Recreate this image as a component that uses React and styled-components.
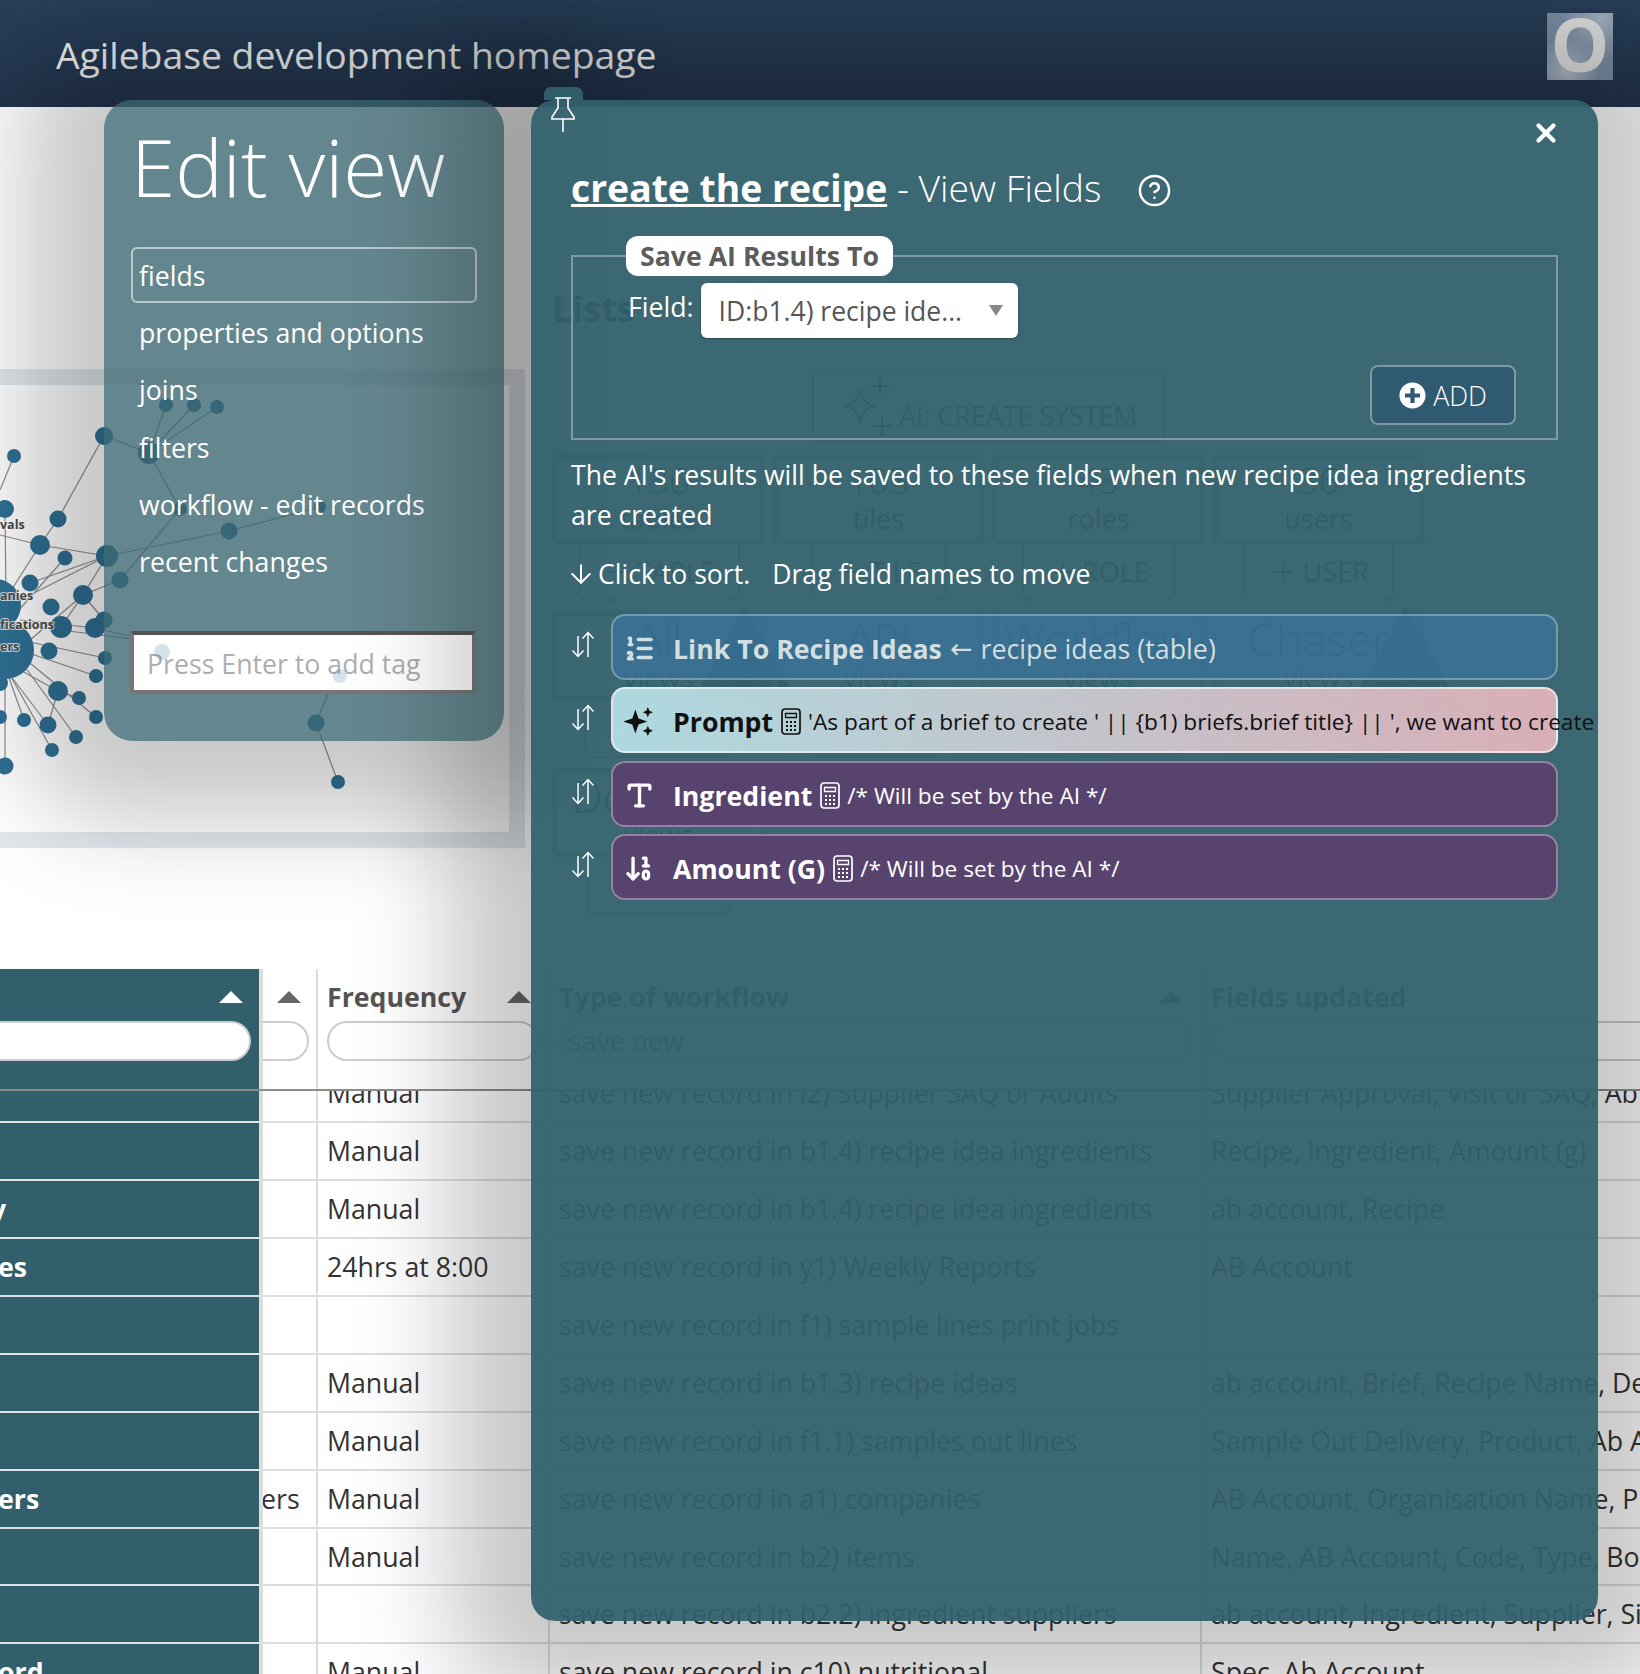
// Agilebase - edit view over the admin homepage
import React from "react";
import styled, { createGlobalStyle } from "styled-components";
import { ArrowDown, ArrowDown10, CircleHelp, ListOrdered, Plus, Type, X } from "lucide-react";
import { FaPlusCircle } from "react-icons/fa";

const GlobalStyle = createGlobalStyle`
  html, body {
    margin: 0;
    padding: 0;
    background: #fff;
  }
  body {
    font-family: "Open Sans", "Liberation Sans", sans-serif;
    color: #333;
  }
  * { box-sizing: border-box; }
`;

const navItems = [
  "fields",
  "properties and options",
  "joins",
  "filters",
  "workflow - edit records",
  "recent changes",
];

const StarsIcon = () => (
  <svg width="29" height="29" viewBox="0 0 28 28" fill="currentColor">
    <path d="M11 2.500l3 8.500 8.500 3-8.500 3-3 8.500-3-8.500-8.500-3 8.500-3z" />
    <path d="M23 0l1.500 3.500 3.500 1.500-3.500 1.500L23 10l-1.500-3.500L18 5l3.500-1.500z" />
    <path d="M23 18l1.500 3.500 3.500 1.500-3.500 1.500L23 28l-1.500-3.500L18 23l3.500-1.500z" />
  </svg>
);

const fields = [
  { kind: "link", icon: ListOrdered, name: "Link To Recipe Ideas", arrow: true, note: "recipe ideas (table)" },
  { kind: "prompt", icon: StarsIcon, name: "Prompt", calc: true, note: "'As part of a brief to create ' || {b1) briefs.brief title} || ', we want to create" },
  { kind: "plain", icon: Type, name: "Ingredient", calc: true, note: "/* Will be set by the AI */" },
  { kind: "plain", icon: ArrowDown10, name: "Amount (G)", calc: true, note: "/* Will be set by the AI */" },
];

const cards = [
  { big: false, title: "136", label: "tables", add: "TABLE", addWidth: 162 },
  { big: false, title: "103", label: "tiles", add: "TILE", addWidth: 136 },
  { big: false, title: "43", label: "roles", add: "ROLE", addWidth: 153 },
  { big: false, title: "36", label: "users", add: "USER", addWidth: 151 },
  { big: true, title: "All", label: "views", add: "VIEW", addWidth: 149, warn: "4" },
  { big: true, title: "API", label: "views", add: "API", addWidth: 125 },
  { big: true, title: "Workflow", label: "views", add: "WORKFLOW", addWidth: 167 },
  { big: true, title: "Chaser", label: "views", add: "CHASER", addWidth: 185, warn: "2" },
  { big: true, title: "Doc Gen", label: "views", add: "DOC", addWidth: 143 },
];

const rows = [
  { tail: "", side: "", freq: "Manual", flow: "save new record in i2) Supplier SAQ or Audits", updated: "Supplier Approval, Visit or SAQ, Ab Account" },
  { tail: "", side: "", freq: "Manual", flow: "save new record in b1.4) recipe idea ingredients", updated: "Recipe, Ingredient, Amount (g)" },
  { tail: "y", side: "", freq: "Manual", flow: "save new record in b1.4) recipe idea ingredients", updated: "ab account, Recipe", pull: true },
  { tail: "es", side: "", freq: "24hrs at 8:00", flow: "save new record in y1) Weekly Reports", updated: "AB Account" },
  { tail: "", side: "", freq: "", flow: "save new record in f1) sample lines print jobs", updated: "" },
  { tail: "", side: "", freq: "Manual", flow: "save new record in b1.3) recipe ideas", updated: "ab account, Brief, Recipe Name, Description" },
  { tail: "", side: "", freq: "Manual", flow: "save new record in f1.1) samples out lines", updated: "Sample Out Delivery, Product, Ab Account" },
  { tail: "ers", side: "ers", freq: "Manual", flow: "save new record in a1) companies", updated: "AB Account, Organisation Name, Phone" },
  { tail: "", side: "", freq: "Manual", flow: "save new record in b2) items", updated: "Name, AB Account, Code, Type, Boxes" },
  { tail: "", side: "", freq: "", flow: "save new record in b2.2) ingredient suppliers", updated: "ab account, Ingredient, Supplier, Size" },
  { tail: "ord", side: "", freq: "Manual", flow: "save new record in c10) nutritional", updated: "Spec, Ab Account" },
];

const nodes = [
  [104, 436, 9], [14, 456, 7], [149, 453, 11], [5, 509, 9], [58, 519, 8.5], [180, 509, 7],
  [40, 545, 10], [65, 558, 7.5], [107, 556, 11], [229, 531, 8.5], [320, 507, 6], [120, 580, 8.5],
  [30, 583, 8.5], [83, 595, 10], [51, 607, 8.5], [61, 627, 11], [95, 628, 10], [104, 620, 8.5],
  [49, 651, 8.5], [105, 658, 7], [96, 676, 7], [316, 723, 8.5], [338, 782, 7], [58, 691, 10],
  [79, 698, 7], [96, 717, 7], [48, 725, 8.5], [76, 737, 7], [24, 720, 7], [52, 750, 7], [5, 766, 8.5],
  [166, 405, 7], [194, 405, 7], [217, 407, 7], [0, 717, 7], [0, 683, 8],
  [-5, 605, 26], [5, 650, 29],
];

const links = [
  [104, 436, 58, 519], [58, 519, 40, 545], [104, 436, 149, 453], [149, 453, 180, 509], [180, 509, 120, 580],
  [149, 453, 166, 405], [149, 453, 194, 405], [149, 453, 217, 407], [107, 556, 229, 531], [229, 531, 320, 507],
  [107, 556, 40, 545], [107, 556, 83, 595], [107, 556, 20, 600], [40, 545, 0, 535], [40, 545, 5, 600],
  [14, 456, 0, 490], [5, 509, 6, 600], [65, 558, 10, 620], [120, 580, 83, 595], [83, 595, 30, 640],
  [83, 595, 104, 620], [20, 620, 95, 628], [20, 625, 156, 642], [95, 628, 156, 642], [20, 640, 105, 658],
  [20, 650, 96, 676], [20, 655, 96, 717], [20, 660, 76, 737], [20, 670, 58, 691], [58, 691, 48, 725],
  [10, 675, 48, 725], [10, 675, 52, 750], [8, 675, 24, 720], [5, 680, 5, 766], [58, 691, 79, 698],
  [316, 723, 338, 782], [316, 723, 337, 673], [83, 595, 61, 627], [30, 583, 107, 556],
];

const PinIcon = () => (
  <svg width="28" height="36" viewBox="0 0 28 36" fill="none" stroke="#fff" strokeWidth="1.6">
    <path d="M6 2h16M9 2v10L3 21v2h22v-2l-6-9V2M14 23v13" />
  </svg>
);

const SortIcon = () => (
  <svg width="24" height="27" viewBox="0 0 24 27" fill="none" stroke="#fff" strokeWidth="1.5">
    <path d="M7 5v20M1.500 19.500L7 25.500l5.500-6M17 26V2M11.500 7.500L17 1.500l5.500 6" />
  </svg>
);

const CalcGlyph = () => (
  <svg width="20" height="27" viewBox="0 0 20 27" fill="none" stroke="currentColor" strokeWidth="1.700">
    <rect x="1" y="1" width="18" height="25" rx="3" />
    <path d="M4.500 5.500h11v4h-11z" strokeWidth="1.300" />
    <path d="M5 14h2M9 14h2M13 14h2M5 18h2M9 18h2M13 18h2M5 22h2M9 22h2M13 22h2" strokeWidth="2" />
  </svg>
);

const AiStarIcon = () => (
  <svg width="60" height="68" viewBox="0 0 60 68" fill="none" stroke="#555" strokeWidth="2">
    <path d="M22 18c2 10 6 14 16 16-10 2-14 6-16 16-2-10-6-14-16-16 10-2 14-6 16-16zM42 4v20M32 14h20M44 44v20M34 54h20" />
  </svg>
);

const WarnTriangle = ({ value }) => (
  <WarnMark width="116" height="104" viewBox="0 0 116 104">
    <path d="M58 0L116 104H0z" fill="#5b686e" />
    <text x="58" y="92" textAnchor="middle" fontSize="44" fontWeight="700" fill="#33404a">
      {value}
    </text>
  </WarnMark>
);

const NetworkGraph = () => (
  <GraphSvg viewBox="0 385 509 448" width="509" height="448">
    {links.map(([x1, y1, x2, y2], i) => (
      <line key={i} x1={x1} y1={y1} x2={x2} y2={y2} stroke="#8d8d8d" strokeWidth="1.2" />
    ))}
    {nodes.map(([cx, cy, r], i) => (
      <circle key={i} cx={cx} cy={cy} r={r} fill="#2f7196" />
    ))}
    <GraphLabel x="0" y="529">vals</GraphLabel>
    <GraphLabel x="0" y="600">anies</GraphLabel>
    <GraphLabel x="0" y="629">fications</GraphLabel>
    <GraphLabel x="0" y="651">ers</GraphLabel>
  </GraphSvg>
);

const AdminPanels = () => (
  <AdminColumn>
    <ListsHeading>Lists</ListsHeading>
    <CreateSystem>
      <AiStarIcon />
      <span>AI: CREATE SYSTEM</span>
    </CreateSystem>
    <CardGrid>
      {cards.map((c) => (
        <CardCell key={c.add}>
          <Card>
            <CardTitle $big={c.big}>{c.title}</CardTitle>
            <CardLabel>{c.label}</CardLabel>
            {c.warn && <WarnTriangle value={c.warn} />}
          </Card>
          <AddLink $width={c.addWidth}>
            <Plus size={30} strokeWidth={1.5} />
            {c.add}
          </AddLink>
        </CardCell>
      ))}
    </CardGrid>
  </AdminColumn>
);

const WorkflowTable = () => (
  <Table>
    <HeadRow>
      <FrozenHead>
        <HeadTitle>
          <span />
          <SortMark $color="#fff" />
        </HeadTitle>
        <FilterPill $pull />
      </FrozenHead>
      <HeadCell $width="55px">
        <HeadTitle>
          <span />
          <SortMark />
        </HeadTitle>
        <FilterPill $pull />
      </HeadCell>
      <HeadCell>
        <HeadTitle>
          <span>Frequency</span>
          <SortMark />
        </HeadTitle>
        <FilterPill />
      </HeadCell>
      <HeadCell>
        <HeadTitle>
          <span>Type of workflow</span>
          <SortMark />
        </HeadTitle>
        <FilterPill>save new</FilterPill>
      </HeadCell>
      <HeadCell $last>
        <HeadTitle>
          <span>Fields updated</span>
        </HeadTitle>
        <FilterPill $open />
      </HeadCell>
    </HeadRow>
    <TableBody>
      <BodyScroll>
        {rows.map((r, i) => (
          <BodyRow key={i}>
            <FrozenCell $pull={r.pull}>{r.tail}</FrozenCell>
            <BodyCell $flush>{r.side}</BodyCell>
            <BodyCell>{r.freq}</BodyCell>
            <BodyCell>{r.flow}</BodyCell>
            <BodyCell $last>{r.updated}</BodyCell>
          </BodyRow>
        ))}
      </BodyScroll>
    </TableBody>
  </Table>
);

const EditViewPanel = () => (
  <EditPanel>
    <EditTitle>Edit view</EditTitle>
    <NavList>
      {navItems.map((item, i) => (
        <NavItem key={item} $active={i === 0}>
          {item}
        </NavItem>
      ))}
    </NavList>
    <TagInput>
      Press Enter to add tag
      <SeeThroughNode $left="20px" $top="9px" $size="16px" />
      <SeeThroughNode $left="199px" $top="34px" $size="14px" />
    </TagInput>
  </EditPanel>
);

const FieldsModal = () => (
  <Modal>
    <PinTab>
      <PinIcon />
    </PinTab>
    <CloseButton>
      <X size={30} strokeWidth={3.4} />
    </CloseButton>
    <ModalTitle>
      <strong>create the recipe</strong>
      <span> - View Fields</span>
      <CircleHelp size={35} strokeWidth={1.7} />
    </ModalTitle>
    <SaveBox>
      <SaveLegend>Save AI Results To</SaveLegend>
      <FieldRow>
        <FieldLabel>Field:</FieldLabel>
        <FieldSelect>
          ID:b1.4) recipe ide...
          <Caret />
        </FieldSelect>
      </FieldRow>
      <AddRow>
        <AddButton>
          <FaPlusCircle size={27} />
          ADD
        </AddButton>
      </AddRow>
    </SaveBox>
    <Explain>
      The AI's results will be saved to these fields when new recipe idea ingredients are created
    </Explain>
    <SortHint>
      <ArrowDown size={30} strokeWidth={1.6} />
      <span>Click to sort.</span>
      <span>Drag field names to move</span>
    </SortHint>
    <FieldList>
      {fields.map((f) => {
        const Icon = f.icon;
        return (
          <FieldLine key={f.name}>
            <SortToggle>
              <SortIcon />
            </SortToggle>
            <FieldCard $kind={f.kind}>
              <FieldIcon>
                <Icon size={31} strokeWidth={2.6} />
              </FieldIcon>
              <FieldName>{f.name}</FieldName>
              {f.arrow && <LinkArrow>←</LinkArrow>}
              {f.calc && (
                <CalcIcon>
                  <CalcGlyph />
                </CalcIcon>
              )}
              <FieldNote $large={f.arrow}>{f.note}</FieldNote>
            </FieldCard>
          </FieldLine>
        );
      })}
    </FieldList>
  </Modal>
);

export default function App() {
  return (
    <Page>
      <GlobalStyle />
      <TopBar>
        <AppTitle>Agilebase development homepage</AppTitle>
        <Avatar>O</Avatar>
      </TopBar>
      <Overview>
        <GraphPanel>
          <NetworkGraph />
        </GraphPanel>
        <AdminPanels />
      </Overview>
      <WorkflowTable />
      <EditViewPanel />
      <FieldsModal />
    </Page>
  );
}

const Page = styled.div`
  position: relative;
  width: 1640px;
  height: 1674px;
  overflow: hidden;
  background: #fff;
`;

const TopBar = styled.header`
  height: 107px;
  background: linear-gradient(180deg, #27405a 0%, #23344d 100%);
  display: flex;
  align-items: flex-start;
  justify-content: space-between;
  padding: 13px 27px 0 56px;
`;

const AppTitle = styled.h1`
  margin: 0;
  padding-top: 17px;
  font-size: 37.3px;
  line-height: 50px;
  font-weight: 400;
  color: #f2f2f2;
`;

const Avatar = styled.div`
  width: 66px;
  height: 67px;
  background:
    radial-gradient(circle at 30% 85%, #b6c0cb 0%, transparent 45%),
    radial-gradient(circle at 80% 10%, #a7b4c2 0%, transparent 50%),
    #7c8fa6;
  color: #e2e2e2;
  font-size: 74px;
  font-weight: 700;
  line-height: 62px;
  text-align: center;
  overflow: hidden;
`;

const Overview = styled.section`
  height: 862px;
  display: flex;
  align-items: flex-start;
  gap: 27px;
  overflow: hidden;
`;

const GraphPanel = styled.div`
  flex: none;
  width: 525px;
  height: 479px;
  margin-top: 262px;
  border: 16px solid #e2e8ed;
  border-left: 0;
  overflow: hidden;
`;

const GraphSvg = styled.svg`
  display: block;
`;

const GraphLabel = styled.text`
  font-size: 12.5px;
  font-weight: 700;
  fill: #4b4b4b;
  paint-order: stroke;
  stroke: rgba(255, 255, 255, 0.8);
  stroke-width: 2px;
`;

const AdminColumn = styled.div`
  flex: none;
  width: 873px;
  padding-top: 180px;
`;

const ListsHeading = styled.h2`
  margin: 0;
  height: 83px;
  font-size: 36px;
  line-height: 44px;
  font-weight: 700;
  color: #333;
`;

const CreateSystem = styled.div`
  width: 353px;
  height: 72px;
  margin: 0 auto 12px;
  padding-left: 24px;
  display: flex;
  align-items: flex-end;
  border: 2px solid #9aaeb6;
  border-radius: 4px;
  font-size: 26.8px;
  line-height: 40px;
  color: #555;
  overflow: hidden;
  span {
    margin: 0 0 4px 1px;
  }
`;

const CardGrid = styled.div`
  display: grid;
  grid-template-columns: repeat(4, 213px);
  column-gap: 7px;
  row-gap: 10px;
`;

const CardCell = styled.div`
  display: flex;
  flex-direction: column;
  align-items: center;
`;

const Card = styled.div`
  position: relative;
  width: 213px;
  height: 90px;
  border: 6px solid #a6bbc4;
  border-radius: 6px;
  text-align: center;
  color: #444;
`;

const CardTitle = styled.div`
  font-size: ${(p) => (p.$big ? "45px" : "36px")};
  line-height: ${(p) => (p.$big ? "44px" : "42px")};
  font-weight: 300;
  white-space: nowrap;
`;

const CardLabel = styled.div`
  font-size: 27px;
  line-height: 30px;
  margin-top: 2px;
`;

const WarnMark = styled.svg`
  position: absolute;
  top: -10px;
  right: -44px;
`;

const AddLink = styled.div`
  width: ${(p) => p.$width}px;
  height: 57px;
  display: flex;
  align-items: center;
  justify-content: center;
  gap: 4px;
  border: 2px solid #9aaeb6;
  border-top: 0;
  border-radius: 0 0 8px 8px;
  font-size: 27px;
  color: #555;
`;

const Table = styled.div`
  width: 1640px;
`;

const HeadRow = styled.div`
  height: 122px;
  display: flex;
  border-bottom: 2px solid #8d8d8d;
`;

const FrozenHead = styled.div`
  flex: none;
  width: 263px;
  background: #315f6c;
  border-right: 4px solid #ddd;
  padding: 0 8px 0 0;
  overflow: hidden;
`;

const HeadCell = styled.div`
  flex: ${(p) => (p.$last ? "1 1 0" : "none")};
  width: ${(p) => p.$width || "auto"};
  min-width: ${(p) => (p.$last ? "0" : "auto")};
  border-right: ${(p) => (p.$last ? "0" : "2px solid #ddd")};
  padding: 0 ${(p) => (p.$last ? "0" : p.$width ? "7px" : "9px")} 0 ${(p) => (p.$width ? "0" : "9px")};
  overflow: hidden;
  &:nth-child(3) { width: 232px; }
  &:nth-child(4) { width: 652px; }
`;

const HeadTitle = styled.div`
  height: 52px;
  padding-top: 3px;
  padding-right: 8px;
  display: flex;
  align-items: center;
  justify-content: space-between;
  font-size: 26.7px;
  font-weight: 700;
  color: #555;
`;

const SortMark = styled.i`
  width: 0;
  height: 0;
  border-left: 12px solid transparent;
  border-right: 12px solid transparent;
  border-bottom: 12px solid ${(p) => p.$color || "#666"};
`;

const FilterPill = styled.div`
  height: 40px;
  margin-left: ${(p) => (p.$pull ? "-40px" : "0")};
  margin-right: ${(p) => (p.$open ? "-40px" : "0")};
  padding: 0 8px;
  border: 2px solid #ccc;
  border-radius: 20px;
  background: #fff;
  font-size: 26.7px;
  line-height: 35px;
  color: #666;
`;

const TableBody = styled.div`
  height: 590px;
  overflow: hidden;
`;

const BodyScroll = styled.div`
  margin-top: -26px;
`;

const BodyRow = styled.div`
  display: flex;
  height: 57.95px;
  font-size: 26.7px;
  line-height: 55px;
  color: #333;
  white-space: nowrap;
`;

const FrozenCell = styled.div`
  flex: none;
  width: 263px;
  background: #315f6c;
  border-right: 4px solid #ddd;
  border-bottom: 2px solid #dfe5e7;
  color: #fff;
  font-weight: 700;
  text-indent: ${(p) => (p.$pull ? "-9px" : "-2px")};
  overflow: hidden;
`;

const BodyCell = styled.div`
  flex: ${(p) => (p.$last ? "1 1 0" : "none")};
  min-width: 0;
  padding-left: ${(p) => (p.$flush ? "0" : "9px")};
  text-indent: ${(p) => (p.$flush ? "-2px" : "0")};
  border-right: ${(p) => (p.$last ? "0" : "2px solid #ddd")};
  border-bottom: 2px solid #ddd;
  overflow: hidden;
  &:nth-child(2) { width: 55px; }
  &:nth-child(3) { width: 232px; }
  &:nth-child(4) { width: 652px; }
`;

const EditPanel = styled.aside`
  position: absolute;
  left: 104px;
  top: 100px;
  width: 400px;
  height: 641px;
  padding: 22px 27px 0 27px;
  border-radius: 28px;
  background: rgba(56, 100, 110, 0.78);
  box-shadow: 0 0 100px 80px rgba(0, 0, 0, 0.22);
  color: #fff;
`;

const EditTitle = styled.h2`
  margin: 0;
  font-size: 80px;
  line-height: 88px;
  font-weight: 300;
  white-space: nowrap;
`;

const NavList = styled.nav`
  margin-top: 37px;
`;

const NavItem = styled.div`
  height: ${(p) => (p.$active ? "56px" : "57.3px")};
  margin-bottom: ${(p) => (p.$active ? "1px" : "0")};
  padding-left: 6px;
  border: 2px solid ${(p) => (p.$active ? "rgba(255,255,255,0.55)" : "transparent")};
  border-radius: 6px;
  font-size: 26.7px;
  line-height: 54px;
`;

const TagInput = styled.div`
  position: relative;
  width: 346px;
  height: 63px;
  margin: 41px 0 0 -1px;
  padding-left: 13px;
  background: #fff;
  border: 4px solid #777;
  border-top-color: #555;
  border-radius: 3px;
  font-size: 26.7px;
  line-height: 58px;
  color: #aeaeae;
  white-space: nowrap;
`;

const SeeThroughNode = styled.span`
  position: absolute;
  left: ${(p) => p.$left};
  top: ${(p) => p.$top};
  width: ${(p) => p.$size};
  height: ${(p) => p.$size};
  border-radius: 50%;
  background: rgba(47, 113, 150, 0.2);
`;

const Modal = styled.main`
  position: absolute;
  left: 531px;
  top: 100px;
  width: 1067px;
  height: 1521px;
  padding: 62px 40px 0;
  border-radius: 24px;
  background: rgba(50, 96, 107, 0.95);
  box-shadow: 0 0 100px 80px rgba(0, 0, 0, 0.22);
  color: #fff;
`;

const PinTab = styled.div`
  position: absolute;
  left: 13px;
  top: -13px;
  width: 39px;
  height: 13px;
  padding: 9px 0 0 5px;
  border-radius: 7px 7px 0 0;
  background: #2f5d69;
`;

const CloseButton = styled.div`
  position: absolute;
  right: 37px;
  top: 18px;
  line-height: 0;
`;

const ModalTitle = styled.h2`
  margin: 0;
  height: 50px;
  display: flex;
  align-items: center;
  font-size: 37.3px;
  font-weight: 300;
  white-space: pre;
  strong {
    font-weight: 700;
    text-decoration: underline;
  }
  svg {
    margin: 6px 0 0 36px;
  }
`;

const SaveBox = styled.fieldset`
  margin: 24px 0 0;
  height: 204px;
  padding: 7px 40px 0 55px;
  border: 2px solid #7d9aa0;
`;

const SaveLegend = styled.legend`
  margin-left: -2px;
  padding: 0 14px;
  height: 40px;
  border-radius: 12px;
  background: #fff;
  color: #5c5c5c;
  font-size: 26.7px;
  line-height: 39px;
  font-weight: 700;
`;

const FieldRow = styled.div`
  display: flex;
  align-items: flex-start;
  gap: 7px;
`;

const FieldLabel = styled.label`
  font-size: 26.7px;
  line-height: 48px;
`;

const FieldSelect = styled.div`
  position: relative;
  width: 317px;
  height: 55px;
  padding-left: 18px;
  border-radius: 6px;
  background: #fff;
  color: #555;
  font-size: 26.5px;
  line-height: 56px;
  box-shadow: 0 1px 2px rgba(0, 0, 0, 0.3);
`;

const Caret = styled.i`
  position: absolute;
  right: 15px;
  top: 22px;
  width: 0;
  height: 0;
  border-left: 7px solid transparent;
  border-right: 7px solid transparent;
  border-top: 11px solid #888;
`;

const AddRow = styled.div`
  display: flex;
  justify-content: flex-end;
  margin-top: 27px;
`;

const AddButton = styled.div`
  width: 146px;
  height: 60px;
  display: flex;
  align-items: center;
  justify-content: center;
  gap: 7px;
  border: 2px solid #7d9aa0;
  border-radius: 8px;
  background: #2f5a72;
  font-size: 26.7px;
  font-weight: 300;
`;

const Explain = styled.p`
  margin: 15px 0 0;
  font-size: 26.6px;
  line-height: 40px;
`;

const SortHint = styled.div`
  margin-top: 19px;
  height: 40px;
  display: flex;
  align-items: center;
  font-size: 26.6px;
  svg {
    margin: 0 2px 0 -5px;
  }
  span + span {
    margin-left: 22px;
  }
`;

const FieldList = styled.div`
  margin-top: 20px;
  display: flex;
  flex-direction: column;
  gap: 7.4px;
`;

const FieldLine = styled.div`
  display: flex;
  align-items: flex-start;
`;

const SortToggle = styled.div`
  flex: none;
  width: 40px;
  padding: 17px 0 0 0;
  line-height: 0;
  color: #fff;
`;

const cardSkins = {
  link: "background: rgba(56, 119, 170, 0.55); color: #d2dedf; border-color: rgba(255,255,255,0.3);",
  prompt:
    "background: linear-gradient(90deg, rgba(190,232,238,0.88), rgba(240,184,192,0.88)); color: #111; border-color: rgba(255,255,255,0.6);",
  plain: "background: rgba(90, 64, 108, 0.92); color: #fff; border-color: rgba(255,255,255,0.35);",
};

const FieldCard = styled.div`
  flex: none;
  width: 947px;
  height: 66px;
  display: flex;
  align-items: center;
  padding: 3px 0 0 11px;
  border: 2px solid;
  border-radius: 14px;
  white-space: nowrap;
  ${(p) => cardSkins[p.$kind]}
`;

const FieldIcon = styled.span`
  flex: none;
  width: 49px;
  line-height: 0;
`;

const FieldName = styled.span`
  font-size: 26.7px;
  font-weight: 700;
`;

const LinkArrow = styled.span`
  margin: 0 8px;
  font-family: "DejaVu Sans", sans-serif;
  font-size: 27px;
`;

const CalcIcon = styled.span`
  flex: none;
  margin: 0 7px 0 8px;
  line-height: 0;
`;

const FieldNote = styled.span`
  font-size: ${(p) => (p.$large ? "26.8px" : "22.65px")};
`;
